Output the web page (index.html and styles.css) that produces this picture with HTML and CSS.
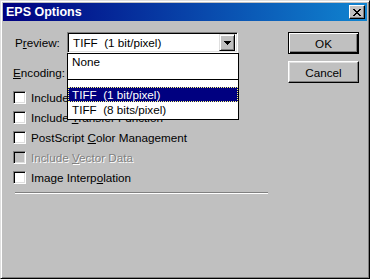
FILE: index.html
```html
<!DOCTYPE html>
<html lang="en">
<head>
    <meta charset="UTF-8">
    <title>EPS Options</title>
    <link rel="stylesheet" href="styles.css">
</head>
<body>
    <div class="window">
        <!-- Title Bar -->
        <div class="titlebar">
            <span class="title">EPS Options</span>
            <span class="close-btn">
                <svg width="8" height="7" viewBox="0 0 8 7"><path d="M0 0h2v1h1v1h2V1h1V0h2v1H7v1H6v1H5v1h1v1h1v1h1v1H6V6H5V5H3v1H2v1H0V6h1V5h1V4h1V3H2V2H1V1H0z" fill="#000"/></svg>
            </span>
        </div>

        <div class="content">
            <!-- Options -->
            <div class="options">
                <div class="field-row">
                    <label class="field-label label-preview">P<u>r</u>eview:</label>
                    <div class="combo">
                        <span class="combo-value">TIFF  (1 bit/pixel)</span>
                        <span class="combo-arrow">
                            <svg width="7" height="4" viewBox="0 0 7 4"><path d="M0 0h7v1H6v1H5v1H4v1H3V3H2V2H1V1H0z" fill="#000"/></svg>
                        </span>
                    </div>
                </div>
                <div class="field-row">
                    <label class="field-label"><u>E</u>ncoding:</label>
                </div>

                <ul class="checks">
                    <li><span class="box"></span><span>Include <u>H</u>alftone Screen</span></li>
                    <li><span class="box"></span><span>Include <u>T</u>ransfer Function</span></li>
                    <li><span class="box"></span><span>PostScript <u>C</u>olor Management</span></li>
                    <li class="disabled"><span class="box"></span><span>Include <u>V</u>ector Data</span></li>
                    <li><span class="box"></span><span>Image Interp<u>o</u>lation</span></li>
                </ul>

                <div class="separator"></div>
            </div>

            <!-- Buttons -->
            <div class="buttons">
                <button class="btn btn-default">OK</button>
                <button class="btn">Cancel</button>
            </div>
        </div>

        <!-- Open dropdown list of the Preview combo -->
        <div class="dropdown">
            <div class="dd-item">None</div>
            <div class="dd-gap"></div>
            <div class="dd-sep"></div>
            <div class="dd-gap small"></div>
            <div class="dd-item selected">TIFF  (1 bit/pixel)</div>
            <div class="dd-item">TIFF  (8 bits/pixel)</div>
        </div>
    </div>
</body>
</html>
```

FILE: styles.css
```css
body {
    margin: 0;
    padding: 0;
    font-family: "Liberation Sans", Arial, sans-serif;
    font-size: 11.7px;
    color: #000;
    background: #c0c0c0;
}

/* Window frame */
.window {
    position: relative;
    width: 370px;
    height: 279px;
    box-sizing: border-box;
    border: 1px solid;
    border-color: #dfdfdf #000 #000 #dfdfdf;
    box-shadow: inset 1px 1px #fff, inset -1px -1px #808080;
    padding: 2px;
    background: #c0c0c0;
}

/* Title Bar */
.titlebar {
    height: 18px;
    display: flex;
    align-items: center;
    justify-content: space-between;
    padding: 0 2px 0 3px;
    background: linear-gradient(90deg, #000080, #1084d0);
}
.title {
    color: #fff;
    font-weight: bold;
    font-size: 12.5px;
}
.close-btn {
    width: 16px;
    height: 14px;
    box-sizing: border-box;
    display: flex;
    align-items: center;
    justify-content: center;
    background: #c0c0c0;
    border: 1px solid;
    border-color: #fff #000 #000 #fff;
    box-shadow: inset -1px -1px #808080;
}

/* Content */
.content {
    display: flex;
    justify-content: space-between;
    padding: 11px 8px 0 10px;
}
.options {
    width: 256px;
}
.field-row {
    display: flex;
    align-items: center;
    height: 21px;
    margin-bottom: 9px;
}
.field-label {
    width: 54px;
}
.label-preview {
    padding-left: 2px;
    width: 52px;
}

/* Combo box */
.combo {
    width: 171px;
    height: 21px;
    box-sizing: border-box;
    display: flex;
    align-items: center;
    justify-content: space-between;
    background: #fff;
    border: 1px solid;
    border-color: #808080 #fff #fff #808080;
    box-shadow: inset 1px 1px #000, inset -1px -1px #dfdfdf;
    padding: 2px;
}
.combo-value {
    white-space: pre;
    padding-left: 3px;
}
.combo-arrow {
    width: 16px;
    height: 17px;
    box-sizing: border-box;
    display: flex;
    align-items: center;
    justify-content: center;
    background: #c0c0c0;
    border: 1px solid;
    border-color: #dfdfdf #000 #000 #dfdfdf;
    box-shadow: inset 1px 1px #fff, inset -1px -1px #808080;
}

/* Checkboxes */
.checks {
    list-style: none;
    margin: -5px 0 0 0;
    padding: 0;
}
.checks li {
    display: flex;
    align-items: center;
    height: 20px;
    white-space: nowrap;
}
.box {
    width: 13px;
    height: 13px;
    box-sizing: border-box;
    margin-right: 5px;
    background: #fff;
    border: 1px solid;
    border-color: #808080 #fff #fff #808080;
    box-shadow: inset 1px 1px #000, inset -1px -1px #dfdfdf;
}
.checks li.disabled {
    color: #808080;
    text-shadow: 1px 1px #fff;
}
.checks li.disabled .box {
    background: #c0c0c0;
}

.separator {
    margin: 5px 0 0 2px;
    width: 253px;
    border-top: 1px solid #808080;
    border-bottom: 1px solid #fff;
}

/* Buttons */
.buttons {
    display: flex;
    flex-direction: column;
    gap: 7px;
}
.btn {
    width: 71px;
    height: 22px;
    box-sizing: border-box;
    font-family: inherit;
    font-size: 11.7px;
    color: #000;
    background: #c0c0c0;
    border: 1px solid;
    border-color: #fff #000 #000 #fff;
    box-shadow: inset -1px -1px #808080, inset 1px 1px #dfdfdf;
    padding: 0;
}
.btn-default {
    border: 1px solid #000;
    box-shadow: inset 1px 1px #fff, inset -1px -1px #000, inset -2px -2px #808080;
}

/* Dropdown list */
.dropdown {
    position: absolute;
    left: 66px;
    top: 52px;
    width: 172px;
    height: 67px;
    box-sizing: border-box;
    border: 1px solid #000;
    background: #fff;
    z-index: 2;
}
.dd-item {
    height: 16px;
    line-height: 16px;
    padding-left: 4px;
    white-space: pre;
}
.dd-gap {
    height: 9px;
}
.dd-gap.small {
    height: 7px;
}
.dd-sep {
    border-top: 1px solid #000;
}
.dd-item.selected {
    height: 15px;
    line-height: 15px;
    background: #000080;
    color: #fff;
    outline: 1px dotted #ffff80;
    outline-offset: -1px;
}
```
